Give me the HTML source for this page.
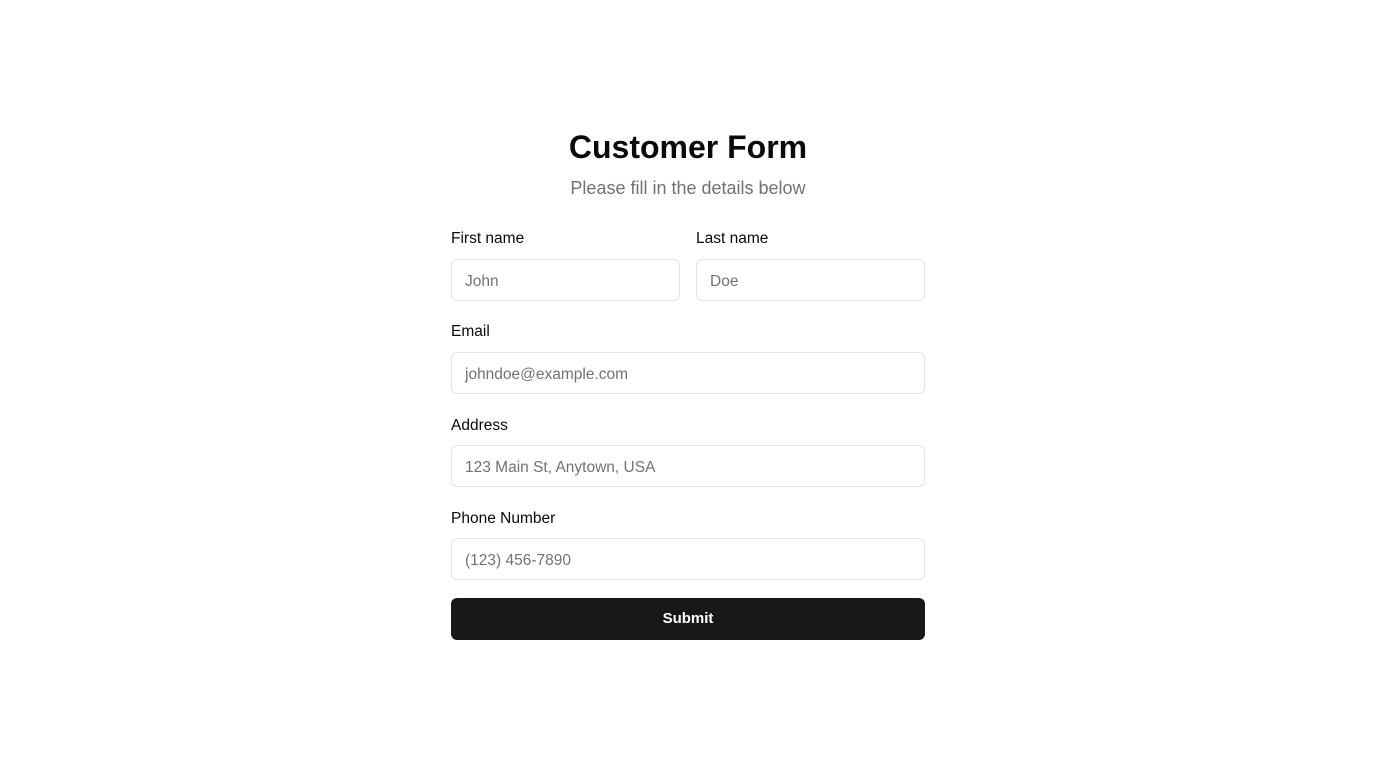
<!DOCTYPE html>
<html><head><style>
body{margin:0;background:#fff;font-family:"Liberation Sans",sans-serif;width:1376px;height:768px;position:relative}
.wrap{position:absolute;left:451px;top:0;width:474px}
h1{position:absolute;top:129px;left:0;width:474px;text-align:center;margin:0;font-size:32px;font-weight:bold;color:#0a0a0a}
.sub{position:absolute;top:178px;width:474px;text-align:center;font-size:18px;color:#6b7280}
label{position:absolute;font-size:15.5px;color:#0a0a0a;font-weight:500}
.in{position:absolute;border:1px solid #e4e4e7;border-radius:6px;box-sizing:border-box;height:42px;padding-left:13px;padding-top:3px;line-height:38px;font-size:15.5px;color:#71717a}
.btn{position:absolute;top:598px;left:0;width:474px;height:42px;background:#18181b;border-radius:6px;color:#fff;text-align:center;line-height:42px;font-size:15px;font-weight:bold}
</style></head><body><div class="wrap">
<h1>Customer Form</h1>
<div class="sub">Please fill in the details below</div>
<label style="top:230px;left:0">First name</label>
<label style="top:230px;left:245px">Last name</label>
<div class="in" style="top:259px;left:0;width:229px">John</div>
<div class="in" style="top:259px;left:245px;width:229px">Doe</div>
<label style="top:323px;left:0">Email</label>
<div class="in" style="top:352px;left:0;width:474px">johndoe@example.com</div>
<label style="top:417px;left:0">Address</label>
<div class="in" style="top:445px;left:0;width:474px">123 Main St, Anytown, USA</div>
<label style="top:510px;left:0">Phone Number</label>
<div class="in" style="top:538px;left:0;width:474px">(123) 456-7890</div>
<div class="btn">Submit</div>
</div></body></html>
